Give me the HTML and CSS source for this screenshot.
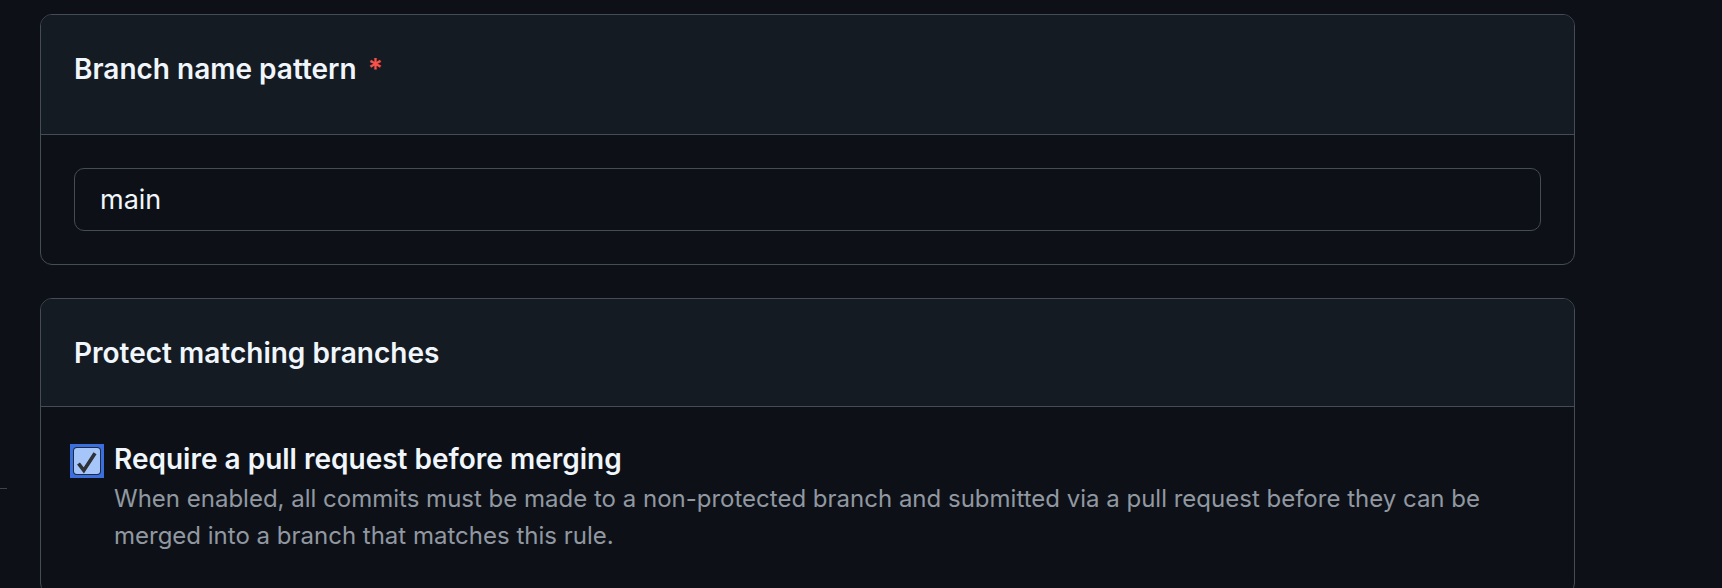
FILE: index.html
```html
<!DOCTYPE html>
<html lang="en">
<head>
<meta charset="utf-8">
<title>Branch protection rule</title>
<link rel="stylesheet" href="styles.css">
</head>
<body>
<div class="edge-mark"></div>
<main class="page">
  <section class="box">
    <header class="box-header box-header-tall">
      <h2 class="box-title">Branch name pattern <span class="required">*</span></h2>
    </header>
    <div class="box-body">
      <div class="text-input">main</div>
    </div>
  </section>

  <section class="box">
    <header class="box-header">
      <h2 class="box-title">Protect matching branches</h2>
    </header>
    <div class="box-body box-body-open">
      <div class="check-row">
        <span class="checkbox">
          <span class="checkbox-inner">
            <svg class="checkmark" viewBox="0 0 34 34" width="34" height="34" aria-hidden="true">
              <path d="M8.5 19.5 L13.8 26.4 L25 9.2" fill="none" stroke="#2e3136" stroke-width="3.6" stroke-linecap="butt" stroke-linejoin="miter"/>
            </svg>
          </span>
        </span>
        <div class="check-text">
          <div class="check-label">Require a pull request before merging</div>
          <p class="check-desc">When enabled, all commits must be made to a non-protected branch and submitted via a pull request before they can be merged into a branch that matches this rule.</p>
        </div>
      </div>
    </div>
  </section>
</main>
</body>
</html>
```

FILE: styles.css
```css
html, body {
  margin: 0;
  padding: 0;
  background: #0d1117;
  height: 588px;
  overflow: hidden;
}

body {
  font-family: Inter, "Noto Sans", "Liberation Sans", sans-serif;
  color: #f0f6fc;
  position: relative;
}

.edge-mark {
  position: absolute;
  left: 0;
  top: 488px;
  width: 7px;
  height: 1px;
  background: #3d444d;
}

.page {
  padding: 14px 0 0 40px;
  width: 1535px;
  display: flex;
  flex-direction: column;
  gap: 33px;
}

.box {
  border: 1px solid #444c56;
  border-radius: 12px;
  overflow: hidden;
  background: #0d1117;
}

.box-header {
  background: #151b23;
  border-bottom: 1px solid #444c56;
  padding: 36px 33px 35px;
}

.box-header-tall {
  padding-bottom: 47px;
}

.box-title {
  margin: 0;
  font-size: 28px;
  line-height: 36px;
  font-weight: 600;
  letter-spacing: 0;
}

.required {
  color: #f85149;
  margin-left: 4px;
}

.box-body {
  padding: 33px;
}

.box-body-open {
  padding: 34px 33px 40px 29px;
}

.text-input {
  height: 63px;
  box-sizing: border-box;
  border: 1px solid #444c56;
  border-radius: 10px;
  padding: 0 25px;
  display: flex;
  align-items: center;
  font-size: 27px;
  color: #f0f6fc;
}

.check-row {
  display: flex;
  gap: 10px;
  align-items: flex-start;
}

.checkbox {
  flex: none;
  width: 34px;
  height: 34px;
  margin-top: 3px;
  background: #3b6fdf;
  padding: 4px;
  box-sizing: border-box;
}

.checkbox-inner {
  display: block;
  position: relative;
  width: 26px;
  height: 26px;
  background: #a6c5f8;
  border-radius: 3px;
  box-shadow: 0 0 0 1px #1f2a3a;
}

.checkmark {
  position: absolute;
  left: -4px;
  top: -4px;
}

.check-text {
  display: flex;
  flex-direction: column;
}

.check-label {
  font-size: 28px;
  line-height: 36px;
  font-weight: 600;
  color: #f0f6fc;
}

.check-desc {
  margin: 3px 0 0;
  font-size: 24px;
  line-height: 37px;
  color: #9198a1;
}
```
